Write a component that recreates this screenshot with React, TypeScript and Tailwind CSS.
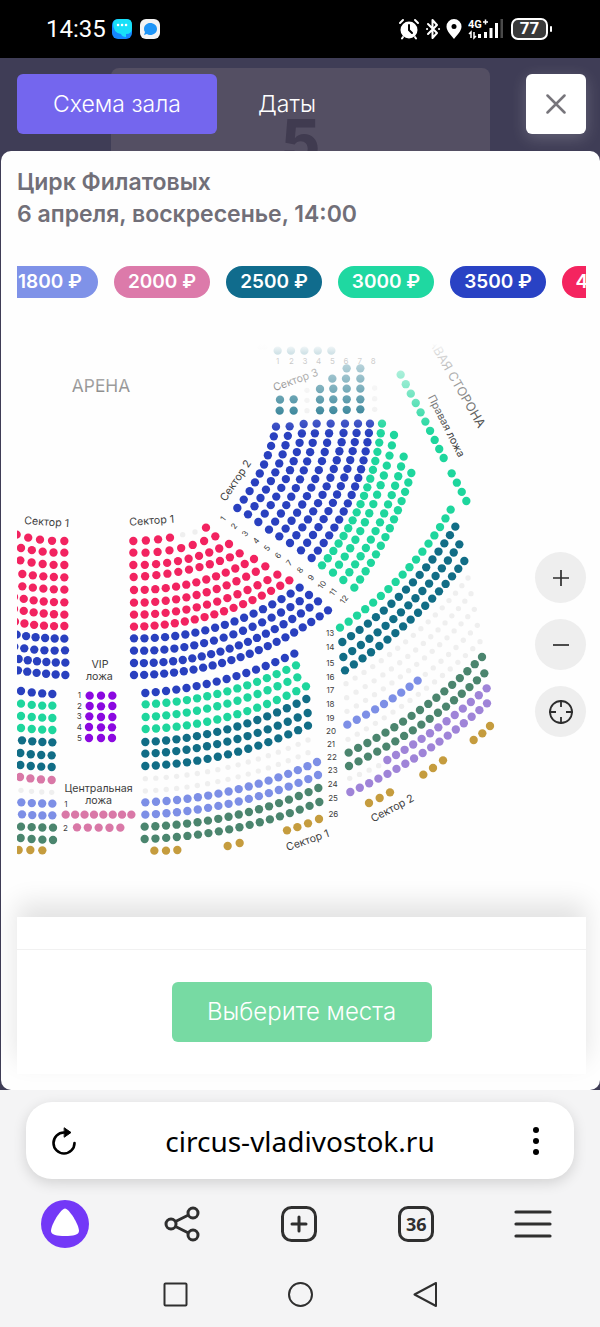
import { useState } from 'react';

type Point = [number, number];

interface Row {
  color: string;
  count: number;
  from: Point;
  mid: Point;
  to: Point;
}

const RED = '#f22360';
const BLUE = '#2940bf';
const GREEN = '#1ed69d';
const TEAL = '#116d86';
const PINK = '#d978a7';
const LILAC = '#7d8fe6';
const FOREST = '#4b856e';
const GOLD = '#c59c3e';
const VIOLET = '#9f84d8';
const PURPLE = '#8b08e0';
const TAKEN = '#efefef';

const row = (color: string, count: number, from: Point, mid: Point, to: Point): Row => ({
  color,
  count,
  from,
  mid,
  to,
});

// Rows of a sector are curves through three points: first seat, middle, last seat
const sectorOneTop: Row[] = [
  row(RED, 4, [10, 123], [66, 120], [120, 113]),
  row(TAKEN, 2, [158, 104], [176, 100], [195, 96]),
  row(RED, 1, [228, 83], [228, 83], [228, 83]),
  row(RED, 8, [10, 158], [136, 148], [256, 109]),
  row(RED, 10, [10, 195], [160, 180], [297, 132]),
  row(RED, 11, [11, 231], [177, 209], [329, 160]),
  row(RED, 13, [12, 270], [199, 247], [372, 177]),
  row(RED, 14, [12, 308], [215, 281], [406, 199]),
  row(RED, 15, [12, 344], [231, 314], [442, 224]),
  row(RED, 17, [12, 380], [253, 343], [478, 241]),
  row(BLUE, 18, [12, 415], [270, 379], [509, 263]),
  row(BLUE, 19, [12, 452], [281, 413], [537, 285]),
  row(BLUE, 21, [12, 489], [299, 446], [564, 304]),
  row(BLUE, 22, [12, 525], [318, 476], [594, 331]),
];

const sectorOneBottom: Row[] = [
  row(BLUE, 16, [46, 129], [275, 91], [493, 11]),
  row(GREEN, 16, [47, 163], [277, 128], [498, 46]),
  row(GREEN, 16, [47, 201], [277, 165], [502, 82]),
  row(GREEN, 17, [47, 237], [292, 201], [528, 109]),
  row(TEAL, 17, [46, 276], [292, 238], [529, 147]),
  row(TEAL, 17, [46, 311], [292, 275], [533, 189]),
  row(TEAL, 17, [46, 348], [294, 313], [534, 227]),
  row(TAKEN, 17, [46, 386], [294, 352], [534, 270]),
  row(TAKEN, 17, [46, 423], [294, 388], [534, 308]),
  row(LILAC, 18, [46, 457], [311, 421], [561, 336]),
  row(LILAC, 18, [46, 494], [311, 458], [564, 375]),
  row(FOREST, 18, [44, 530], [311, 497], [565, 414]),
  row(FOREST, 18, [44, 567], [313, 535], [568, 456]),
  row(GOLD, 3, [73, 602], [108, 602], [142, 600]),
  row(GOLD, 2, [293, 588], [311, 583], [329, 579]),
  row(GOLD, 4, [471, 541], [518, 526], [567, 507]),
];

const sectorLeftTop: Row[] = [
  row(RED, 5, [20, 104], [90, 119], [163, 123]),
  row(RED, 5, [33, 144], [98, 155], [163, 158]),
  row(RED, 5, [31, 181], [98, 192], [163, 195]),
  row(RED, 5, [37, 222], [100, 229], [163, 232]),
  row(RED, 5, [37, 259], [100, 266], [163, 269]),
  row(RED, 6, [12, 291], [86, 303], [163, 307]),
  row(RED, 6, [12, 327], [86, 339], [163, 344]),
  row(RED, 6, [15, 365], [87, 376], [163, 378]),
  row(BLUE, 6, [20, 404], [91, 413], [163, 416]),
  row(BLUE, 6, [13, 440], [88, 450], [165, 451]),
  row(BLUE, 6, [26, 477], [95, 485], [166, 488]),
  row(BLUE, 6, [24, 511], [94, 520], [166, 525]),
];

const sectorLeftBottom: Row[] = [
  row(BLUE, 4, [33, 123], [81, 129], [127, 132]),
  row(GREEN, 4, [33, 161], [81, 166], [127, 167]),
  row(GREEN, 4, [33, 198], [81, 202], [127, 204]),
  row(GREEN, 4, [33, 234], [81, 238], [127, 240]),
  row(TEAL, 4, [36, 271], [82, 275], [127, 277]),
  row(TEAL, 4, [31, 309], [78, 314], [125, 316]),
  row(TEAL, 4, [31, 345], [78, 349], [125, 351]),
  row(PINK, 4, [30, 381], [77, 387], [125, 390]),
  row(TAKEN, 4, [33, 421], [80, 425], [125, 427]),
  row(LILAC, 4, [34, 457], [81, 460], [127, 461]),
  row(LILAC, 4, [36, 493], [82, 496], [127, 496]),
  row(FOREST, 4, [33, 530], [81, 532], [129, 533]),
  row(FOREST, 4, [32, 564], [81, 568], [129, 570]),
  row(GOLD, 3, [26, 600], [61, 600], [97, 601]),
  // VIP box
  row(PURPLE, 3, [239, 137], [273, 137], [307, 137]),
  row(PURPLE, 3, [239, 168], [273, 169], [307, 168]),
  row(PURPLE, 3, [238, 199], [273, 201], [307, 201]),
  row(PURPLE, 3, [237, 231], [273, 232], [306, 232]),
  row(PURPLE, 3, [237, 264], [273, 264], [306, 264]),
  // Central box
  row(PINK, 8, [167, 494], [266, 494], [364, 494]),
  row(PINK, 5, [201, 532], [266, 533], [331, 533]),
];

const sectorTwoTop: Row[] = [
  row(BLUE, 10, [228, 290], [186, 417], [112, 534]),
  row(BLUE, 11, [269, 289], [226, 427], [144, 553]),
  row(BLUE, 12, [311, 282], [264, 434], [175, 576]),
  row(BLUE, 13, [350, 281], [300, 448], [207, 599]),
  row(BLUE, 14, [392, 281], [340, 460], [238, 619]),
  row(BLUE, 15, [435, 281], [380, 469], [270, 639]),
  row(BLUE, 16, [474, 281], [417, 481], [303, 661]),
  row(BLUE, 17, [510, 281], [455, 495], [335, 684]),
  row(GREEN, 18, [546, 281], [487, 510], [366, 706]),
  row(GREEN, 16, [582, 315], [514, 536], [399, 728]),
  row(GREEN, 15, [611, 380], [540, 577], [430, 750]),
  row(GREEN, 14, [634, 429], [563, 608], [463, 773]),
  // Sector 3
  row(TEAL, 2, [239, 242], [260, 242], [281, 242]),
  row(TEAL, 4, [360, 241], [420, 240], [481, 238]),
  row(TEAL, 2, [240, 209], [260, 209], [281, 208]),
  row(TEAL, 4, [360, 209], [420, 208], [481, 208]),
  row(TEAL, 4, [360, 177], [420, 176], [481, 176]),
  row(TEAL, 3, [397, 146], [438, 146], [481, 146]),
  row(TEAL, 2, [440, 115], [460, 115], [481, 115]),
  row(TEAL, 5, [233, 62], [313, 62], [394, 62]),
  row(TAKEN, 3, [321, 181], [321, 211], [321, 242]),
  row(TAKEN, 3, [524, 174], [524, 206], [524, 238]),
  row(TAKEN, 2, [180, 51], [187, 51], [194, 51]),
];

const rightBox: Row[] = [
  row(GREEN, 10, [92, 134], [159, 261], [221, 384]),
  row(GREEN, 4, [245, 430], [268, 472], [289, 513]),
];

const sectorTwoBottom: Row[] = [
  row(GREEN, 17, [60, -37], [248, -196], [392, -391]),
  row(TEAL, 17, [67, 6], [258, -151], [406, -340]),
  row(TEAL, 17, [70, 51], [265, -104], [418, -287]),
  row(TEAL, 17, [75, 91], [272, -61], [433, -237]),
  row(TAKEN, 17, [78, 131], [280, -14], [444, -186]),
  row(TAKEN, 17, [80, 173], [287, 30], [453, -139]),
  row(TAKEN, 17, [81, 214], [290, 73], [463, -92]),
  row(LILAC, 9, [82, 254], [192, 192], [293, 122]),
  row(TAKEN, 8, [316, 103], [397, 33], [472, -44]),
  row(TAKEN, 17, [84, 298], [295, 163], [480, 5]),
  row(FOREST, 17, [86, 338], [300, 210], [486, 51]),
  row(FOREST, 17, [87, 378], [304, 254], [493, 100]),
  row(TAKEN, 4, [89, 415], [133, 397], [176, 377]),
  row(VIOLET, 13, [202, 360], [355, 262], [500, 145]),
  row(VIOLET, 17, [91, 456], [308, 339], [501, 190]),
  row(GOLD, 3, [147, 489], [179, 474], [210, 457]),
  row(GOLD, 3, [310, 404], [339, 384], [369, 361]),
  row(GOLD, 3, [461, 300], [487, 280], [510, 258]),
];

// Row numbers running down the aisle: number, x, y
const aisleLabels: [number, number, number][] = [
  [13, 30, -22],
  [14, 31, 20],
  [15, 31, 68],
  [16, 31, 110],
  [17, 31, 151],
  [18, 31, 191],
  [19, 31, 233],
  [20, 33, 273],
  [21, 33, 312],
  [22, 36, 351],
  [23, 38, 391],
  [24, 38, 432],
  [25, 39, 475],
  [26, 40, 521],
];

const prices = [
  { value: 1800, className: 'bg-[#7f92e8]' },
  { value: 2000, className: 'bg-[#dc7aaa]' },
  { value: 2500, className: 'bg-[#106c8d]' },
  { value: 3000, className: 'bg-[#1fd8a1]' },
  { value: 3500, className: 'bg-[#2942c4]' },
  { value: 4000, className: 'bg-[#f4245f]' },
];

function seatAt(r: Row, t: number): Point {
  const a = 2 * (t - 0.5) * (t - 1);
  const b = 4 * t * (1 - t);
  const c = 2 * t * (t - 0.5);
  return [
    a * r.from[0] + b * r.mid[0] + c * r.to[0],
    a * r.from[1] + b * r.mid[1] + c * r.to[1],
  ];
}

function Seats({ rows }: { rows: Row[] }) {
  return (
    <>
      {rows.map((r, i) =>
        Array.from({ length: r.count }, (_, n) => {
          const [cx, cy] = seatAt(r, r.count > 1 ? n / (r.count - 1) : 0);
          return <circle key={`${i}-${n}`} cx={cx} cy={cy} r={r.color === TAKEN ? 8 : 12.5} fill={r.color} />;
        })
      )}
    </>
  );
}

interface LabelProps {
  x: number;
  y: number;
  size?: number;
  angle?: number;
  anchor?: 'start' | 'middle' | 'end';
  children: React.ReactNode;
}

function Label({ x, y, size = 32, angle = 0, anchor = 'middle', children }: LabelProps) {
  return (
    <text
      x={x}
      y={y}
      fontSize={size}
      textAnchor={anchor}
      dominantBaseline="central"
      transform={`rotate(${angle} ${x} ${y})`}
    >
      {children}
    </text>
  );
}

function HallMap() {
  return (
    <svg viewBox="0 0 1707 1650" className="block w-full" fill="#3d3d3d" role="img" aria-label="Схема зала">
      <defs>
        <linearGradient id="fade" x1="0" y1="0" x2="0" y2="1">
          <stop offset="0" stopColor="#fefefe" />
          <stop offset="0.13" stopColor="#fefefe" />
          <stop offset="0.22" stopColor="#fefefe" stopOpacity="0.82" />
          <stop offset="1" stopColor="#fefefe" stopOpacity="0" />
        </linearGradient>
      </defs>

      <Label x={252} y={167} size={52}>АРЕНА</Label>

      <g transform="translate(-21 510)">
        <Seats rows={sectorLeftTop} />
        <Label x={110} y={66} angle={4}>Сектор 1</Label>
      </g>

      <g transform="translate(-21 960)">
        <Seats rows={sectorLeftBottom} />
        <Label x={270} y={42}>VIP</Label>
        <Label x={268} y={80}>ложа</Label>
        {[1, 2, 3, 4, 5].map((n) => (
          <Label key={n} x={208} y={103 + n * 32} size={24}>{n}</Label>
        ))}
        <Label x={266} y={414}>Центральная</Label>
        <Label x={266} y={452}>ложа</Label>
        <Label x={168} y={463} size={24}>1</Label>
        <Label x={166} y={533} size={24}>2</Label>
      </g>

      <g transform="translate(339 510)">
        <Seats rows={sectorOneTop} />
        <Label x={65} y={62} angle={-4}>Сектор 1</Label>
        {Array.from({ length: 12 }, (_, n) => (
          <Label key={n} x={279 + n * 33} y={56 + n * 22} size={24} angle={-52}>{n + 1}</Label>
        ))}
      </g>

      <g transform="translate(339 960)">
        <Seats rows={sectorOneBottom} />
        <Label x={533} y={571} angle={-19}>Сектор 1</Label>
      </g>

      <g transform="translate(549 0)">
        <Seats rows={sectorTwoTop} />
        <Label x={107} y={452} angle={-56}>Сектор 2</Label>
        <Label x={287} y={150} angle={-20}>Сектор 3</Label>
        {Array.from({ length: 8 }, (_, n) => (
          <Label key={n} x={233 + n * 41} y={92} size={24}>{n + 1}</Label>
        ))}
      </g>

      <g transform="translate(1059 0)">
        <Seats rows={rightBox} />
        <Label x={229} y={288} angle={63}>Правая ложа</Label>
        <Label x={337} y={290} angle={60} size={38} anchor="end">ПРАВАЯ СТОРОНА</Label>
      </g>

      <g transform="translate(909 930)">
        <Seats rows={sectorTwoBottom} />
        {aisleLabels.map(([n, x, y]) => (
          <Label key={n} x={x} y={y} size={24}>{n}</Label>
        ))}
        <Label x={217} y={505} angle={-28}>Сектор 2</Label>
      </g>

      <rect width="1707" height="310" fill="url(#fade)" />
    </svg>
  );
}

function StatusBar() {
  return (
    <div className="flex h-[58px] items-center bg-black pr-12 pl-[46px] text-white">
      <span className="font-['Roboto',sans-serif] text-2xl">14:35</span>
      <svg className="ml-[6px] size-5" viewBox="0 0 20 20">
        <rect width="20" height="20" rx="6" fill="#1687ff" />
        <path d="M1 4Q2 0 7 0h8q5 0 5 6v3q0 6-6 6v3q-4 0-5-3Q1 14 1 4z" fill="#18e0f8" />
        <path d="M6 6h.1M10 6h.1M14 6h.1" stroke="#fff" strokeWidth="2.5" strokeLinecap="round" />
      </svg>
      <svg className="ml-2 size-5" viewBox="0 0 20 20">
        <rect width="20" height="20" rx="6" fill="#f3f3f3" />
        <path d="M10 4c4 0 7 2.500 7 6s-3 6-7 6q-2 0-3-1l-3 1 1-3q-1-1-1-3c0-3.500 3-6 6-6z" fill="#1e95f7" />
      </svg>

      <div className="ml-auto flex items-center">
        {/* Alarm */}
        <svg className="size-[22px]" viewBox="0 0 22 22" fill="none" stroke="#fff" strokeWidth="2" strokeLinecap="round">
          <circle cx="11" cy="12" r="8.500" fill="#fff" stroke="none" />
          <path d="M2 5l3-3M20 5l-3-3M5 19l-1 1.500M17 19l1 1.500" />
          <path d="M11 7v5l3 3" stroke="#000" />
        </svg>
        {/* Bluetooth */}
        <svg className="ml-[5px] h-[22px] w-4" viewBox="0 0 16 22" fill="none" stroke="#fff" strokeWidth="2" strokeLinejoin="round" strokeLinecap="round">
          <path d="M3 6l9 9-4.500 5V2L12 7l-9 9M2 11h.1M14 11h.1" />
        </svg>
        {/* Location */}
        <svg className="ml-[5px] h-[22px] w-4" viewBox="0 0 16 22">
          <path d="M8 1a7.500 7.500 0 0 0-7.500 7.500C.5 13 5 17 8 21c3-4 7.500-8 7.500-12.500A7.500 7.500 0 0 0 8 1z" fill="#fff" />
          <circle cx="8" cy="8.500" r="2.500" fill="#000" />
        </svg>
        {/* Mobile network */}
        <svg className="ml-[6px] h-[22px] w-9" viewBox="0 0 36 22" fill="#fff">
          <text x="0" y="10" fontSize="11" fontWeight="700" fontFamily="Roboto">4G</text>
          <path d="M15 4h5M17.500 1.500v5M3 20v-6l-2 2M6 14v6l2-2" stroke="#fff" strokeWidth="1.500" fill="none" />
          <path d="M10 16h3v4h-3zM16 14h3v6h-3zM21.500 10h3v10h-3zM27 5h3v15h-3z" />
          <path d="M32.500 1h2.500v19h-2.500z" fill="#4a4a4a" />
        </svg>
        <span className="ml-[7px] flex h-[22px] w-[37px] items-center justify-center rounded-[7px] border-2 border-white bg-[#3a3a3a] font-['Roboto',sans-serif] text-[17px] font-bold">
          77
        </span>
        <span className="ml-[2px] h-[6px] w-[2px] rounded-full bg-white" />
      </div>
    </div>
  );
}

function BrowserBar() {
  return (
    <footer className="bg-[#f4f4f5] pt-3 text-[#2f2f2f]">
      <div className="mx-[26px] flex h-[77px] items-center justify-between rounded-[26px] bg-white px-[26px] text-black shadow-[0_4px_14px_#00000024]">
        <button aria-label="Обновить">
          <svg className="h-7 w-6" viewBox="0 0 24 28" fill="none" stroke="currentColor" strokeWidth="2.600" strokeLinecap="round">
            <path d="M22.500 16A10.500 10.500 0 1 1 12 5.500h2" />
            <path d="M12.500 1l6.500 4.500-6.500 4.500z" fill="currentColor" strokeWidth="1" strokeLinejoin="round" />
          </svg>
        </button>
        <a href="#" className="font-['Noto_Sans',sans-serif] text-[28px]">circus-vladivostok.ru</a>
        <button aria-label="Ещё" className="flex w-6 flex-col items-center gap-[5px]">
          <span className="size-[6px] rounded-full bg-black" />
          <span className="size-[6px] rounded-full bg-black" />
          <span className="size-[6px] rounded-full bg-black" />
        </button>
      </div>

      <nav className="mt-5 grid h-[50px] grid-cols-5 items-center justify-items-center pr-2 pl-[6px]">
        <button aria-label="Алиса">
          <svg className="size-12" viewBox="0 0 48 48">
            <circle cx="24" cy="24" r="24" fill="#7338f7" />
            <path d="M24 8.500c4 0 14 16 14 22.500 0 4-6 5-14 5s-14-1-14-5C10 24.500 20 8.500 24 8.500z" fill="#fff" />
          </svg>
        </button>
        <button aria-label="Поделиться">
          <svg className="size-9" viewBox="0 0 36 36" fill="none" stroke="currentColor" strokeWidth="3">
            <circle cx="7" cy="18" r="5" />
            <circle cx="29" cy="7" r="5" />
            <circle cx="29" cy="29" r="5" />
            <path d="M11.500 15.500l13-6.500M11.500 20.500l13 6.500" />
          </svg>
        </button>
        <button aria-label="Новая вкладка">
          <svg className="size-9" viewBox="0 0 36 36" fill="none" stroke="currentColor" strokeWidth="3" strokeLinecap="round">
            <rect x="1.500" y="1.500" width="33" height="33" rx="9" />
            <path d="M18 11v14M11 18h14" />
          </svg>
        </button>
        <button className="flex size-9 items-center justify-center rounded-[10px] border-3 border-[#2f2f2f] font-['Noto_Sans',sans-serif] text-lg font-bold">
          36
        </button>
        <button aria-label="Меню">
          <svg className="h-8 w-[38px]" viewBox="0 0 38 32" fill="none" stroke="currentColor" strokeWidth="3.200" strokeLinecap="round">
            <path d="M2 4h34M2 16h34M2 28h34" />
          </svg>
        </button>
      </nav>

      <nav className="flex items-center justify-center gap-[100px] pt-[33px] pb-5">
        <button aria-label="Недавние">
          <svg className="size-[25px]" viewBox="0 0 25 25" fill="none" stroke="currentColor" strokeWidth="2">
            <rect x="1.500" y="1.500" width="22" height="22" rx="1" />
          </svg>
        </button>
        <button aria-label="Домой">
          <svg className="size-[25px]" viewBox="0 0 25 25" fill="none" stroke="currentColor" strokeWidth="2">
            <circle cx="12.500" cy="12.500" r="11.500" />
          </svg>
        </button>
        <button aria-label="Назад">
          <svg className="size-[25px]" viewBox="0 0 25 25" fill="none" stroke="currentColor" strokeWidth="2" strokeLinejoin="round">
            <path d="M23 1v23L1.500 12.500z" />
          </svg>
        </button>
      </nav>
    </footer>
  );
}

export default function App() {
  const [tab, setTab] = useState<'map' | 'dates'>('map');

  return (
    <div className="min-h-screen bg-[#f4f4f5] font-['Inter',sans-serif]">
      <StatusBar />

      <div className="bg-[#3f3d56]">
        <header className="relative flex items-center overflow-hidden pt-4 pr-[14px] pb-[17px] pl-[17px]">
          {/* Calendar card behind the dialog */}
          <div className="absolute top-[10px] right-[110px] left-[111px] h-[120px] rounded-t-lg bg-[#544f63] pt-[43px] text-center text-[60px] leading-[60px] font-extrabold text-[#403b50]">
            5
          </div>
          <button
            onClick={() => setTab('map')}
            className={`relative h-[60px] w-[200px] rounded-md text-[23px] font-light text-white ${tab === 'map' ? 'bg-[#7466ee]' : ''}`}
          >
            Схема зала
          </button>
          <button
            onClick={() => setTab('dates')}
            className={`relative h-[60px] w-[140px] rounded-md text-[23px] font-light text-white ${tab === 'dates' ? 'bg-[#7466ee]' : ''}`}
          >
            Даты
          </button>
          <button
            aria-label="Закрыть"
            className="relative ml-auto flex size-[60px] items-center justify-center rounded-md bg-white shadow-[0_4px_16px_#ffffff33]"
          >
            <svg className="size-5" viewBox="0 0 20 20" stroke="#77757b" strokeWidth="2.500" strokeLinecap="round">
              <path d="M1.500 1.500l17 17M18.500 1.500l-17 17" />
            </svg>
          </button>
        </header>

        <main className="ml-px rounded-[10px] bg-[#fefefe] pt-[15px] pr-[14px] pb-4 pl-4">
          <h1 className="text-[23px] leading-8 font-semibold text-[#716f78]">
            Цирк Филатовых
            <br />
            6 апреля, воскресенье, 14:00
          </h1>

          <div className="mt-9 overflow-hidden">
            <ul className="-ml-[15px] flex gap-4">
              {prices.map((price) => (
                <li
                  key={price.value}
                  className={`flex h-8 w-24 shrink-0 items-center justify-center rounded-full text-[19px] font-semibold text-white ${price.className}`}
                >
                  {price.value} ₽
                </li>
              ))}
            </ul>
          </div>

          <div className="relative mt-8">
            <HallMap />
            <div className="absolute top-[222px] right-0 flex flex-col gap-4 text-[#2d2d2d]">
              <button aria-label="Приблизить" className="flex size-[51px] items-center justify-center rounded-full bg-[#eeeeee]">
                <svg className="size-4" viewBox="0 0 16 16" stroke="currentColor" strokeWidth="1.700">
                  <path d="M8 0v16M0 8h16" />
                </svg>
              </button>
              <button aria-label="Отдалить" className="flex size-[51px] items-center justify-center rounded-full bg-[#eeeeee]">
                <svg className="size-4" viewBox="0 0 16 16" stroke="currentColor" strokeWidth="1.700">
                  <path d="M0 8h16" />
                </svg>
              </button>
              <button aria-label="По центру" className="flex size-[51px] items-center justify-center rounded-full bg-[#eeeeee]">
                <svg className="size-[26px]" viewBox="0 0 26 26" fill="none" stroke="currentColor" strokeWidth="1.800">
                  <circle cx="13" cy="13" r="11" />
                  <path d="M13 1v7M13 18v7M1 13h7M18 13h7" />
                </svg>
              </button>
            </div>
          </div>

          <div className="relative mt-[37px] bg-white pt-8 shadow-[0_-14px_24px_#0000001c]">
            <div className="flex justify-center border-t border-[#f1f1f1] py-8">
              <button className="h-[60px] w-[260px] rounded-md bg-[#77daa3] text-2xl font-light text-white">
                Выберите места
              </button>
            </div>
          </div>
        </main>
      </div>

      <BrowserBar />
    </div>
  );
}
